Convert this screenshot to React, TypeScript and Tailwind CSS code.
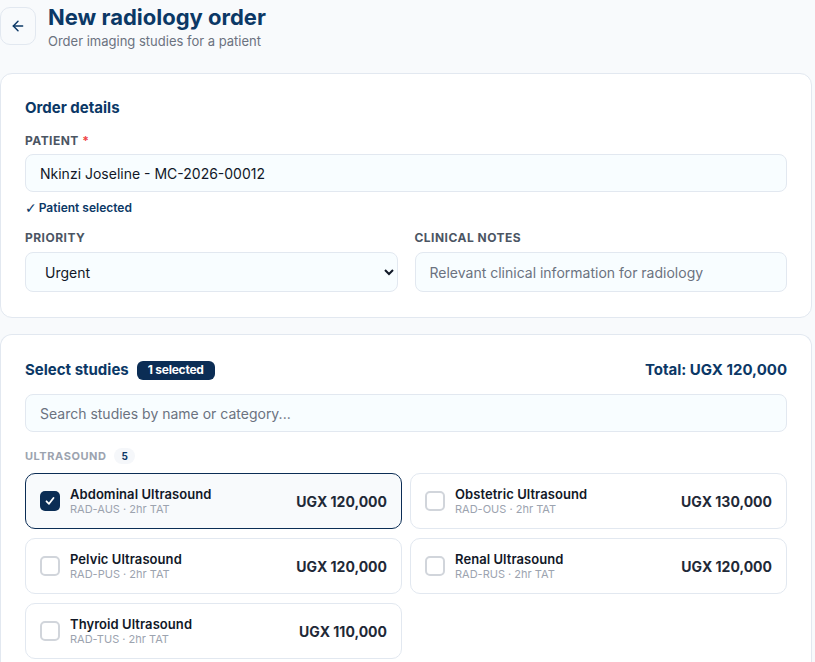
import React from "react";

const NAVY = "#0b3866";

type Study = { name: string; code: string; price: string; selected?: boolean };

const studies: Study[] = [
  { name: "Abdominal Ultrasound", code: "RAD-AUS", price: "UGX 120,000", selected: true },
  { name: "Obstetric Ultrasound", code: "RAD-OUS", price: "UGX 130,000" },
  { name: "Pelvic Ultrasound", code: "RAD-PUS", price: "UGX 120,000" },
  { name: "Renal Ultrasound", code: "RAD-RUS", price: "UGX 120,000" },
  { name: "Thyroid Ultrasound", code: "RAD-TUS", price: "UGX 110,000" },
];

function StudyCard({ s }: { s: Study }) {
  return (
    <div
      className={
        s.selected
          ? "flex h-[56px] items-center rounded-[10px] border border-[#0b2d55] bg-[#f8fafc] pl-[14px] pr-[14px]"
          : "flex h-[56px] items-center rounded-[10px] border border-[#e2e8f0] bg-white pl-[14px] pr-[14px]"
      }
    >
      {s.selected ? (
        <div className="flex h-[20px] w-[20px] items-center justify-center rounded-[5px] bg-[#0b2d55]">
          <svg width="12" height="12" viewBox="0 0 12 12" fill="none">
            <path d="M2.5 6.3 L5 8.8 L9.5 3" stroke="white" strokeWidth="1.8" strokeLinecap="round" strokeLinejoin="round" />
          </svg>
        </div>
      ) : (
        <div className="h-[20px] w-[20px] rounded-[5px] border-2 border-[#d1d5db] bg-white" />
      )}
      <div className="ml-[10px] flex flex-1 flex-col">
        <span className="text-[13px] font-semibold leading-[16px] tracking-[0.005em] text-[#111827]">{s.name}</span>
        <span className="text-[11px] leading-[14px] text-[#9ca3af]">{s.code} · 2hr TAT</span>
      </div>
      <span className="text-[14px] font-bold text-[#1f2937]">{s.price}</span>
    </div>
  );
}

export default function App() {
  return (
    <div
      className="min-h-[662px] w-[815px] bg-[#f8fafc]"
      style={{ fontFamily: "Inter, 'Noto Sans', sans-serif" }}
    >
      <div className="w-[812px]">
        {/* Header */}
        <div className="flex items-start gap-[12px] pt-[7px]">
          <button className="flex h-[38px] w-[36px] items-center justify-center rounded-[10px] border border-[#e2e8f0] bg-[#f8fafc]">
            <svg width="16" height="16" viewBox="0 0 24 24" fill="none" stroke={NAVY} strokeWidth="2.2" strokeLinecap="round" strokeLinejoin="round">
              <path d="M19 12H5" />
              <path d="M12 19l-7-7 7-7" />
            </svg>
          </button>
          <div className="-mt-[4px] flex flex-col">
            <h1 className="text-[22px] font-bold leading-[28px] text-[#0b3866]">New radiology order</h1>
            <p className="mt-[1px] text-[13px] leading-[18px] text-[#6b7280]">Order imaging studies for a patient</p>
          </div>
        </div>

        {/* Card 1 */}
        <div className="mt-[23px] rounded-[12px] border border-[#e2e8f0] bg-white px-[24px] pb-[25px] pt-[23px]">
          <h2 className="text-[15px] font-bold leading-[22px] text-[#0b3866]">Order details</h2>
          <div className="mt-[14px] text-[12px] font-bold uppercase leading-[16px] tracking-[0.04em] text-[#4b5563]">
            Patient <span className="text-[#ef4444]">*</span>
          </div>
          <div className="mt-[5px] flex h-[38px] items-center rounded-[8px] border border-[#e2e8f0] bg-[#f8fdff] px-[14px] text-[14px] text-[#111827]">
            Nkinzi Joseline - MC-2026-00012
          </div>
          <div className="mt-[8px] flex items-center text-[12px] font-semibold leading-[16px] text-[#0b3866]">
            <span className="mr-[2px] text-[14px] font-bold" style={{ fontFamily: "'DejaVu Sans', sans-serif" }}>✓</span>
            Patient selected
          </div>
          <div className="mt-[14px] grid grid-cols-2 gap-x-[17px]">
            <div className="flex flex-col">
              <label className="text-[12px] font-bold uppercase leading-[16px] tracking-[0.04em] text-[#4b5563]">Priority</label>
              <select
                defaultValue="Urgent"
                className="mt-[6px] h-[40px] rounded-[8px] border border-[#e2e8f0] bg-[#f8fdff] px-[15px] text-[14px] text-[#111827]"
              >
                <option>Routine</option>
                <option>Urgent</option>
                <option>STAT</option>
              </select>
            </div>
            <div className="flex flex-col">
              <label className="text-[12px] font-bold uppercase leading-[16px] tracking-[0.04em] text-[#4b5563]">Clinical notes</label>
              <input
                placeholder="Relevant clinical information for radiology"
                className="mt-[6px] h-[40px] rounded-[8px] border border-[#e2e8f0] bg-[#f8fdff] px-[14px] text-[14px] text-[#111827] placeholder:text-[#6b7280] outline-none"
              />
            </div>
          </div>
        </div>

        {/* Card 2 */}
        <div className="mt-[16px] rounded-t-[12px] border border-b-0 border-[#e2e8f0] bg-white px-[24px] pb-[3px] pt-[24px]">
          <div className="flex h-[22px] items-center justify-between">
            <div className="flex items-center gap-[8px]">
              <h2 className="text-[15px] font-bold text-[#0b3866]">Select studies</h2>
              <span className="flex h-[19px] items-center rounded-[6px] bg-[#0b2d55] px-[11px] text-[12px] font-bold tracking-[-0.02em] text-white">
                1 selected
              </span>
            </div>
            <span className="text-[15px] font-bold text-[#0b3866]">Total: UGX 120,000</span>
          </div>
          <input
            placeholder="Search studies by name or category..."
            className="mt-[13px] h-[38px] w-full rounded-[8px] border border-[#e2e8f0] bg-[#f8fdff] px-[14px] text-[14px] text-[#111827] placeholder:text-[#6b7280] outline-none"
          />
          <div className="mt-[16px] flex h-[16px] items-center gap-[8px]">
            <span className="text-[11px] font-bold uppercase tracking-[0.05em] text-[#9ca3af]">Ultrasound</span>
            <span className="flex h-[16px] items-center rounded-full bg-[#f5f7fa] px-[7px] text-[10px] font-bold text-[#0b3866]">5</span>
          </div>
          <div className="mt-[9px] grid grid-cols-2 gap-x-[8px] gap-y-[9px]">
            {studies.map((s) => (
              <StudyCard key={s.code} s={s} />
            ))}
          </div>
        </div>
      </div>
    </div>
  );
}
